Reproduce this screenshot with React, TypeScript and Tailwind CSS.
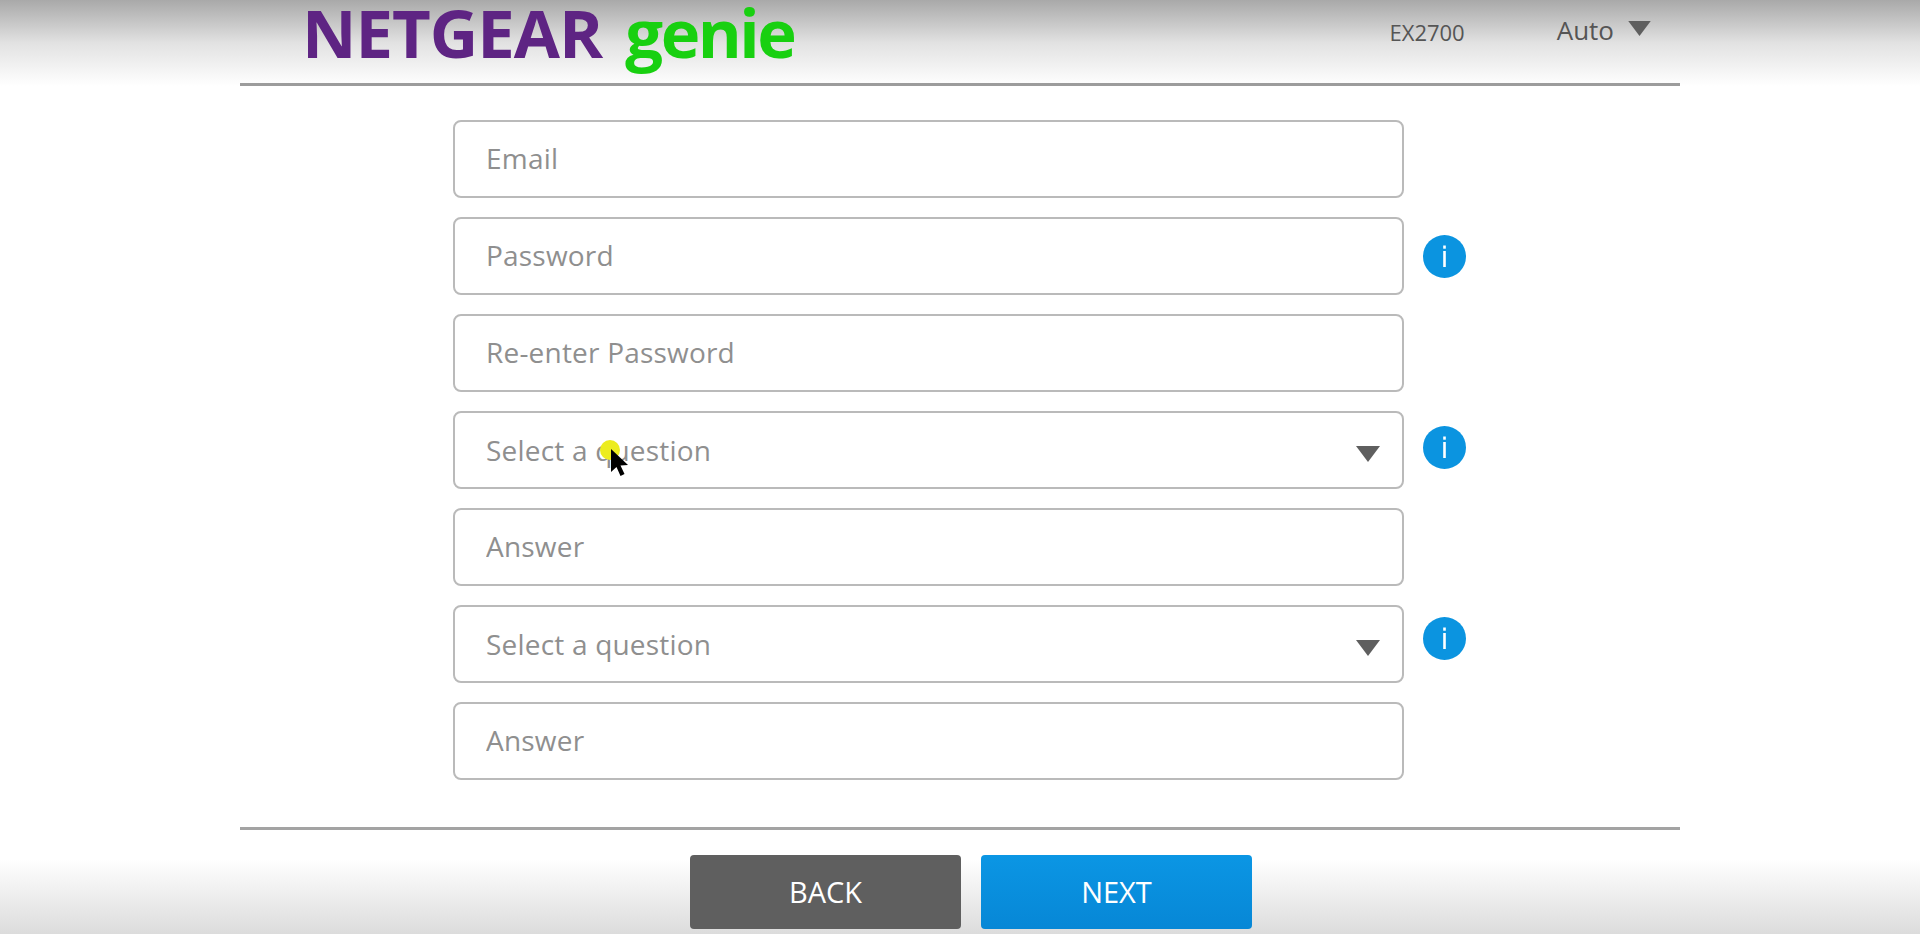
const FONT = "font-['Open_Sans','Noto_Sans',sans-serif]";

type Field = {
  label: string;
  select?: boolean;
  // the info dots in the original sit a little above the middle of their row
  info?: string;
};

const FIELDS: Field[] = [
  { label: "Email" },
  { label: "Password", info: "mb-0" },
  { label: "Re-enter Password" },
  { label: "Select a question", select: true, info: "mb-[5px]" },
  { label: "Answer" },
  { label: "Select a question", select: true, info: "mb-[11px]" },
  { label: "Answer" },
];

function InfoDot({ className }: { className?: string }) {
  return (
    <svg
      className={`w-[43px] h-[43px] shrink-0 ${className ?? ""}`}
      viewBox="0 0 43 43"
      aria-hidden="true"
    >
      <circle cx="21.5" cy="21.5" r="21.5" fill="#0b94e0" />
      <rect x="20.2" y="10.5" width="2.6" height="3.2" fill="#fff" />
      <rect x="20.2" y="16" width="2.6" height="16" fill="#fff" />
    </svg>
  );
}

function Caret({ className }: { className?: string }) {
  return (
    <svg
      className={className}
      viewBox="0 0 24 16"
      fill="#5f5f5f"
      aria-hidden="true"
    >
      <path d="M0 0H24L12 16Z" />
    </svg>
  );
}

function Cursor() {
  return (
    <div className="absolute left-[147px] top-[29px] w-[34px] h-[40px] pointer-events-none">
      <div className="absolute left-0 top-0 w-[20px] h-[20px] rounded-full bg-[#ecec1e]" />
      <svg
        className="absolute left-[10px] top-[8px] w-[20px] h-[30px]"
        viewBox="0 0 20 30"
        aria-hidden="true"
      >
        <path d="M1 1L1 24L6.5 19L10.5 28L14.5 26L10.5 17.5L18 17Z" fill="#000" />
      </svg>
    </div>
  );
}

function FormRow({ field, cursor }: { field: Field; cursor?: boolean }) {
  return (
    <div className="flex items-center gap-[19px]">
      <div className="relative w-[951px] h-[78px]">
        {field.select ? (
          <div className="w-full h-full flex items-center justify-between pl-[31px] pr-[22px] border-2 border-[#bababa] rounded-[8px] bg-white text-[28px] tracking-[0.2px] text-[#8f8f8f]">
            <span>{field.label}</span>
            <Caret className="w-[24px] h-[16px] mt-[8px]" />
          </div>
        ) : (
          <input
            placeholder={field.label}
            className="w-full h-full pl-[31px] pb-[2px] border-2 border-[#bababa] rounded-[8px] bg-white text-[28px] tracking-[0.2px] placeholder:text-[#8f8f8f] outline-none"
          />
        )}
        {cursor && <Cursor />}
      </div>
      {field.info && <InfoDot className={field.info} />}
    </div>
  );
}

export default function App() {
  return (
    <div className={`${FONT} w-full h-[934px] overflow-hidden flex flex-col bg-white`}>
      <header className="h-[86px] shrink-0 bg-gradient-to-b from-[#a9a9a9] via-[#e2e2e2] via-50% to-white">
        <div className="w-[1440px] h-full mx-auto border-b-[3px] border-[#9c9c9c] flex items-start pl-[62px]">
          <span className="text-[67px] leading-[64px] font-bold text-[#5e2483] tracking-[-1px]">
            NETGEAR
          </span>
          <span className="ml-[23px] text-[67px] leading-[64px] font-bold text-[#18d010] tracking-[-2.5px]">
            genie
          </span>
          <span className="ml-auto mt-[18px] text-[22px] leading-[28px] text-[#555]">
            EX2700
          </span>
          <span className="ml-[92px] mt-[14px] text-[26px] leading-[32px] text-[#555]">
            Auto
          </span>
          <Caret className="ml-[13px] mr-[28px] mt-[21px] w-[25px] h-[15px]" />
        </div>
      </header>

      <main className="flex-1 flex flex-col">
        <div className="mt-[34px] ml-[453px] flex flex-col gap-[19px]">
          {FIELDS.map((field, i) => (
            <FormRow key={i} field={field} cursor={i === 3} />
          ))}
        </div>
        <div className="flex-1 mt-[47px] bg-gradient-to-b from-white from-30% to-[#dcdcdc]">
          <div className="w-[1440px] mx-auto border-t-[3px] border-[#a3a3a3] flex justify-center gap-[20px] pt-[25px] pl-[22px]">
            <button className="w-[271px] h-[74px] rounded-[4px] bg-[#5f5f5f] text-white text-[29px]">
              BACK
            </button>
            <button className="w-[271px] h-[74px] rounded-[4px] bg-gradient-to-b from-[#0b96e4] to-[#0787d6] text-white text-[29px]">
              NEXT
            </button>
          </div>
        </div>
      </main>
    </div>
  );
}
